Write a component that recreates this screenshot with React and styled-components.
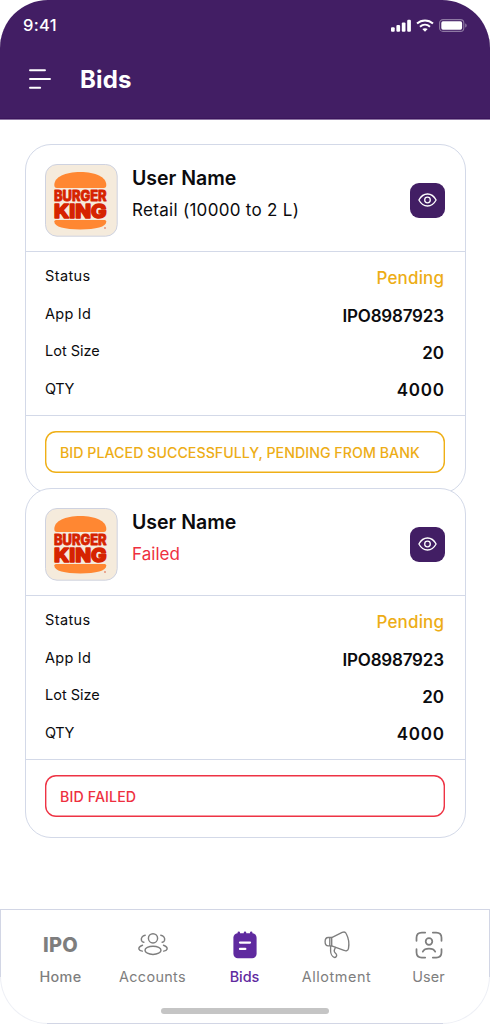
import React from "react";
import styled, { createGlobalStyle } from "styled-components";

const GlobalStyle = createGlobalStyle`
  * { box-sizing: border-box; }
  body { margin: 0; background: #fff; font-family: Inter, "Liberation Sans", sans-serif; }
`;

const Screen = styled.div`
  width: 490px;
  height: 1024px;
  display: flex;
  flex-direction: column;
  overflow: hidden;
  background: #fff;
`;

const Header = styled.header`
  height: 120px;
  flex: none;
  background: #421e64;
  border-bottom: 1px solid #8e76a3;
  box-shadow: inset 0 -1px #3a145b;
  border-radius: 48px 48px 0 0;
  color: #fff;
`;

const StatusBar = styled.div`
  height: 50px;
  padding: 0 23px 0 23px;
  display: flex;
  align-items: center;
  justify-content: space-between;
`;

const Clock = styled.span`
  font-size: 16.5px;
  font-weight: 500;
  letter-spacing: 0.3px;
`;

const Indicators = styled.div`
  display: flex;
  align-items: center;
  gap: 5px;
  svg { display: block; }
`;

const TitleRow = styled.div`
  height: 58px;
  padding-left: 29px;
  display: flex;
  align-items: center;
  gap: 29px;
`;

const Title = styled.h1`
  margin: 0;
  font-size: 24px;
  font-weight: 700;
  letter-spacing: 0.2px;
`;

const Main = styled.main`
  flex: 1;
  padding: 24px 24px 0 25px;
`;

const Card = styled.article`
  position: relative;
  width: 441px;
  height: 350px;
  margin-bottom: -6px;
  border: 1px solid #d3d9e8;
  border-radius: 26px;
  background: #fff;
  color: #0b0b0e;
`;

const CardHead = styled.div`
  height: 107px;
  padding: 0 20px 0 19px;
  display: flex;
  border-bottom: 1px solid #d3d9e8;
`;

const Logo = styled.svg`
  display: block;
  flex: none;
  width: 73px;
  height: 73px;
  margin-top: 19px;
`;

const Summary = styled.div`
  flex: 1;
  padding: 20px 0 0 14px;
`;

const Name = styled.h2`
  margin: 0;
  font-size: 19.5px;
  line-height: 26px;
  font-weight: 600;
  letter-spacing: 0;
`;

const Detail = styled.p`
  margin: 6px 0 0;
  font-size: 17px;
  line-height: 26px;
  letter-spacing: ${(p) => (p.$failed ? 0.05 : 0.3)}px;
  color: ${(p) => (p.$failed ? "#ee2f40" : "#0b0b0e")};
`;

const ViewButton = styled.button`
  width: 35px;
  height: 35px;
  margin-top: 38px;
  padding: 0 0 1px;
  display: grid;
  place-items: center;
  border: 0;
  border-radius: 9px;
  background: #421e64;
  color: #fff;
`;

const Rows = styled.dl`
  height: 164px;
  margin: 0;
  padding: 7px 21px 0 19px;
  border-bottom: 1px solid #d3d9e8;
`;

const Row = styled.div`
  height: 37.4px;
  display: flex;
  align-items: center;
  justify-content: space-between;
`;

const Label = styled.dt`
  padding-bottom: 3.6px;
  font-size: 14.5px;
  letter-spacing: ${(p) => p.$track}px;
`;

const Value = styled.dd`
  margin: 0;
  padding-top: 1.2px;
  font-size: 17px;
  font-weight: ${(p) => (p.$pending ? 500 : 600)};
  letter-spacing: ${(p) => p.$track}px;
  margin-right: ${(p) => -p.$track}px;
  color: ${(p) => (p.$pending ? "#edad16" : "#0b0b0e")};
`;

const Banner = styled.div`
  height: 42px;
  margin: 15px 20px 0 19px;
  padding-left: 15px;
  display: flex;
  align-items: center;
  box-shadow: inset 0 0 0 1.4px ${(p) => (p.$failed ? "#ee3344" : "#efaf16")};
  border-radius: 11px;
  color: ${(p) => (p.$failed ? "#ee2f40" : "#edad16")};
  font-size: 14.2px;
  font-weight: 500;
  letter-spacing: ${(p) => p.$track}px;
  white-space: nowrap;
`;

const Footer = styled.nav`
  flex: none;
  height: 115px;
  padding: 17px 14px 0;
  border: 1px solid rgba(211, 214, 229, 0.4);
  border-radius: 0 0 48px 48px;
  background:
    linear-gradient(#d3d6e5, #d3d6e5) 0 0 / 100% 1px,
    linear-gradient(#d3d6e5, #d3d6e5) 0 0 / 1px 68px,
    linear-gradient(#d3d6e5, #d3d6e5) 100% 0 / 1px 68px,
    linear-gradient(#d3d6e5, #d3d6e5) 50% 100% / 396px 1px;
  background-origin: border-box;
  background-repeat: no-repeat;
  display: flex;
  flex-direction: column;
  align-items: center;
`;

const Tabs = styled.div`
  width: 461px;
  padding-right: 1px;
  height: 68px;
  display: grid;
  grid-template-columns: repeat(5, 92px);
`;

const Tab = styled.div`
  display: flex;
  flex-direction: column;
  align-items: center;
  color: ${(p) => (p.$active ? "#5f2a9f" : "#7e7e7e")};
  font-size: 14.4px;
  font-weight: ${(p) => p.$weight || 400};
  letter-spacing: ${(p) => p.$track}px;
  white-space: nowrap;
`;

const TabIcon = styled.div`
  height: 36px;
  display: flex;
  align-items: center;
  svg { display: block; overflow: visible; }
`;

const TabLabel = styled.span`
  margin-top: 5px;
  line-height: 18px;
`;

const IpoMark = styled.span`
  font-size: 20px;
  font-weight: 800;
  letter-spacing: 0.3px;
`;

const HomeIndicator = styled.div`
  width: 168px;
  height: 6px;
  margin-top: 13px;
  border-radius: 3px;
  background: #c5c5c5;
`;

const Stroke = ({ size = 28, width = 1.5, children }) => (
  <svg width={size} height={size} viewBox="0 0 28 28" fill="none" stroke="currentColor"
    strokeWidth={width} strokeLinecap="round" strokeLinejoin="round">
    {children}
  </svg>
);

const BurgerLogo = () => (
  <Logo viewBox="0 0 73 73">
    <rect x=".5" y=".5" width="71.7" height="71.7" rx="11.5" fill="#f5ebdc" stroke="#ced2e0" />
    <path d="M9.3 21C9.3 13 20 8 35.3 8S61.3 13 61.3 21Q61.3 24 58.8 24H11.8Q9.3 24 9.3 21Z" fill="#ff8732" />
    <path d="M9.3 57.5Q9.3 56 11 56H59.6Q61.3 56 61.3 57.5C61.3 63 51 65.4 35.3 65.4S9.3 63 9.3 57.5Z" fill="#ff8732" />
    <g fill="#d62300" stroke="#d62300" strokeLinejoin="round" fontFamily="Inter, sans-serif" fontWeight="800">
      <text x="9" y="36.8" fontSize="14" strokeWidth=".8" textLength="52.6" lengthAdjust="spacingAndGlyphs">BURGER</text>
      <text x="9" y="53.5" fontSize="19.3" strokeWidth="1.5" textLength="52.6" lengthAdjust="spacingAndGlyphs">KING</text>
    </g>
    <circle cx="60" cy="64" r=".8" fill="#d62300" opacity=".75" />
  </Logo>
);

const EyeIcon = () => (
  <svg width="19" height="14" viewBox="0 0 19 14" fill="none" stroke="currentColor" strokeWidth="1.3" strokeLinejoin="round">
    <path d="M.9 7C3 3.1 5.9 1 9.5 1S16 3.1 18.1 7C16 10.9 13.1 13 9.5 13S3 10.9.9 7Z" />
    <circle cx="9.5" cy="7" r="2.8" />
  </svg>
);

const AccountsIcon = () => (
  <Stroke width={1.45}>
    <circle cx="14" cy="7.3" r="4.6" />
    <ellipse cx="14" cy="19.3" rx="8" ry="4.1" />
    <path d="M6.2 4.2C3.4 4.8 1.7 7.1 2.5 9.4C2.9 10.4 3.8 11 4.8 11.3M21.8 4.2C24.6 4.8 26.3 7.1 25.5 9.4C25.1 10.4 24.2 11 23.2 11.3M3.5 14.2C1 15.1-.6 16.5 0 18.2C.4 19.3 1.7 19.9 3.3 20.1M24.5 14.2C27 15.1 28.6 16.5 28 18.2C27.6 19.3 26.3 19.9 24.7 20.1" />
  </Stroke>
);

const BidsIcon = () => (
  <svg width="24" height="28" viewBox="0 0 24 28">
    <path d="M5.8 1.8V3.8M12 1.8V3.8M18.2 1.8V3.8" stroke="#5f2a9f" strokeWidth="2.5" strokeLinecap="round" />
    <rect x=".4" y="2.2" width="23.2" height="25" rx="4.5" fill="#5f2a9f" />
    <path d="M7 11.6H17M7 17.9H12.3" stroke="#fff" strokeWidth="2.3" strokeLinecap="round" />
  </svg>
);

const MegaphoneIcon = () => (
  <Stroke width={1.35}>
    <path d="M8.7 7.2L19.2 2C20.7 1.3 22.3 1.5 23 2.9C25.4 7.3 26.4 12.9 25.5 18C25.1 20.4 22.9 21.1 21 19.9L8.7 15.5Z" transform="translate(0 -.6)" />
    <path d="M8.7 6.5H5.2C3 6.5 2.1 8.7 2.1 10.8S3 14.9 5.2 14.9H8.7M6.8 6.7V14.6M7.6 15.4V20C7.6 22.8 9.4 25.7 11.2 26.4C12.7 26.8 14 25.2 13.6 23.7C13.3 22.3 11.6 22 11.3 20.4C11 18.7 12 17.4 12.5 16.5" />
  </Stroke>
);

const UserIcon = () => (
  <Stroke width={1.75}>
    <path d="M1.5 9.8V6.8Q1.5 1.5 6.8 1.5H10.2M17.8 1.5H21.2Q26.5 1.5 26.5 6.8V9.8M26.5 18.2V21.2Q26.5 26.5 21.2 26.5H17.8M10.2 26.5H6.8Q1.5 26.5 1.5 21.2V18.2" />
    <circle cx="14" cy="10.5" r="3.3" />
    <path d="M7.8 20.6C9.8 16.7 18.2 16.7 20.2 20.6" />
  </Stroke>
);

const bids = [
  { name: "User Name", detail: "Retail (10000 to 2 L)", banner: "BID PLACED SUCCESSFULLY, PENDING FROM BANK", track: 0.035 },
  { name: "User Name", detail: "Failed", banner: "BID FAILED", failed: true, track: 0.12 },
];

const fields = [
  { label: "Status", value: "Pending", pending: true, lt: 0.4, vt: 0.15 },
  { label: "App Id", value: "IPO8987923", lt: 0.25, vt: -0.2 },
  { label: "Lot Size", value: "20", lt: 0, vt: 0 },
  { label: "QTY", value: "4000", lt: -0.45, vt: 0.8 },
];

const tabs = [
  { label: "Home", icon: <IpoMark>IPO</IpoMark>, weight: 500, track: 0.3 },
  { label: "Accounts", icon: <AccountsIcon />, track: 0.35 },
  { label: "Bids", icon: <BidsIcon />, active: true, weight: 500, track: 0 },
  { label: "Allotment", icon: <MegaphoneIcon />, track: 0.55 },
  { label: "User", icon: <UserIcon />, track: 0.05 },
];

const BidCard = ({ bid }) => (
  <Card>
    <CardHead>
      <BurgerLogo />
      <Summary>
        <Name>{bid.name}</Name>
        <Detail $failed={bid.failed}>{bid.detail}</Detail>
      </Summary>
      <ViewButton aria-label="View bid"><EyeIcon /></ViewButton>
    </CardHead>
    <Rows>
      {fields.map((f) => (
        <Row key={f.label}>
          <Label $track={f.lt}>{f.label}</Label>
          <Value $pending={f.pending} $track={f.vt}>{f.value}</Value>
        </Row>
      ))}
    </Rows>
    <Banner $failed={bid.failed} $track={bid.track}>{bid.banner}</Banner>
  </Card>
);

export default function App() {
  return (
    <>
      <GlobalStyle />
      <Screen>
        <Header>
          <StatusBar>
            <Clock>9:41</Clock>
            <Indicators>
              <svg width="20" height="13" viewBox="0 0 20 13" fill="#fff">
                <rect x="0" y="8.2" width="3.7" height="4.6" rx="1.1" />
                <rect x="5.4" y="6" width="3.7" height="6.8" rx="1.1" />
                <rect x="10.8" y="3.5" width="3.7" height="9.3" rx="1.1" />
                <rect x="16.2" y=".8" width="3.7" height="12" rx="1.1" />
              </svg>
              <svg width="18" height="13" viewBox="0 0 18 13" fill="none" stroke="#fff" strokeWidth="2">
                <path d="M1 4.6C5.5.5 12.5.5 17 4.6M4 7.7C7 5.1 11 5.1 14 7.7" />
                <path d="M6.3 10.1C7.8 8.9 10.2 8.9 11.7 10.1L9 12.7Z" fill="#fff" stroke="none" />
              </svg>
              <svg width="28" height="13" viewBox="0 0 28 13">
                <rect x=".6" y=".6" width="24.2" height="11.8" rx="3.4" fill="none" stroke="#8e79a3" strokeWidth="1.1" />
                <rect x="2.3" y="2.3" width="20.8" height="8.4" rx="1.6" fill="#fff" />
                <path d="M26.2 4.5C28.2 5.2 28.2 7.8 26.2 8.5Z" fill="#8e79a3" />
              </svg>
            </Indicators>
          </StatusBar>
          <TitleRow>
            <svg width="22" height="21" viewBox="0 0 22 21" stroke="#fff" strokeWidth="1.9" strokeLinecap="round">
              <path d="M1 1.3H16M1 10H21M1 18.7H11.2" />
            </svg>
            <Title>Bids</Title>
          </TitleRow>
        </Header>
        <Main>
          {bids.map((bid) => <BidCard key={bid.banner} bid={bid} />)}
        </Main>
        <Footer>
          <Tabs>
            {tabs.map((t) => (
              <Tab key={t.label} $active={t.active} $weight={t.weight} $track={t.track}>
                <TabIcon>{t.icon}</TabIcon>
                <TabLabel>{t.label}</TabLabel>
              </Tab>
            ))}
          </Tabs>
          <HomeIndicator />
        </Footer>
      </Screen>
    </>
  );
}
